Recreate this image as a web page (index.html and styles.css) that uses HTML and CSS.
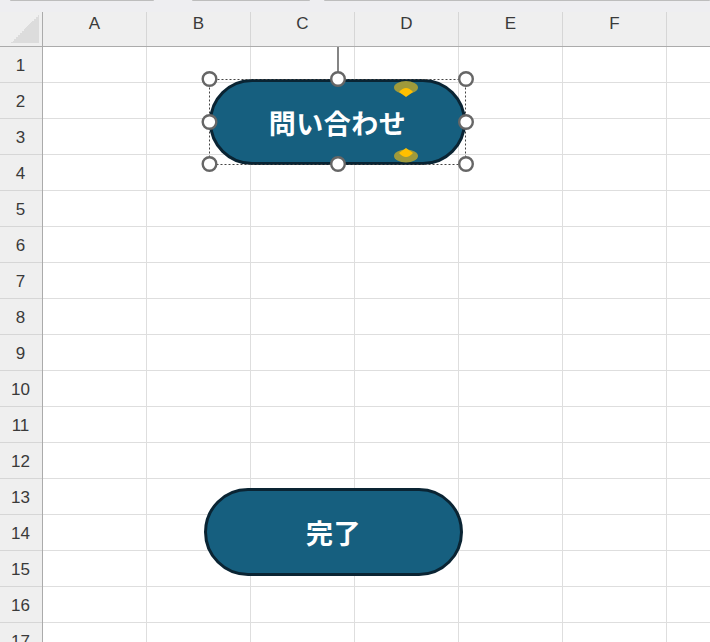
FILE: index.html
```html
<!DOCTYPE html>
<html lang="ja">
<head>
<meta charset="utf-8">
<title>Sheet</title>
<link rel="stylesheet" href="styles.css">
</head>
<body>
<div class="window">
  <div class="topstrip">
    <span class="tab tab-1"></span>
    <span class="tab tab-2"></span>
    <span class="tab tab-3"></span>
  </div>
  <div class="sheet">
    <div class="corner"><span class="corner-tri"></span></div>
    <div class="col-header">
      <div class="col">A</div>
      <div class="col">B</div>
      <div class="col">C</div>
      <div class="col">D</div>
      <div class="col">E</div>
      <div class="col">F</div>
      <div class="col"></div>
    </div>
    <div class="row-header">
      <div class="row">1</div>
      <div class="row">2</div>
      <div class="row">3</div>
      <div class="row">4</div>
      <div class="row">5</div>
      <div class="row">6</div>
      <div class="row">7</div>
      <div class="row">8</div>
      <div class="row">9</div>
      <div class="row">10</div>
      <div class="row">11</div>
      <div class="row">12</div>
      <div class="row">13</div>
      <div class="row">14</div>
      <div class="row">15</div>
      <div class="row">16</div>
      <div class="row">17</div>
    </div>
    <div class="cells">
      <div class="shape shape-inquiry">問い合わせ</div>
      <div class="shape shape-done">完了</div>
      <svg class="selection" width="500" height="200" viewBox="0 0 500 200">
        <line x1="295" y1="0" x2="295" y2="25" stroke="#666" stroke-width="1.6"/>
        <rect x="166.5" y="32.5" width="256" height="85" fill="none" stroke="#444" stroke-width="1" stroke-dasharray="2 2"/>
        <ellipse cx="363" cy="40.5" rx="12" ry="6.5" fill="#9f9a3b"/>
        <path d="M356,45 Q363,37 370,45 L363,50 Z" fill="#ffc000"/>
        <ellipse cx="363" cy="109" rx="12" ry="6.5" fill="#9f9a3b"/>
        <path d="M363,101 L370,106 Q363,114 356,106 Z" fill="#ffc000"/>
        <g fill="#fff" stroke="#666" stroke-width="2.4">
          <circle cx="166.5" cy="32" r="6.8"/>
          <circle cx="295" cy="32" r="6.8"/>
          <circle cx="423" cy="32" r="6.8"/>
          <circle cx="166.5" cy="75" r="6.8"/>
          <circle cx="423" cy="75" r="6.8"/>
          <circle cx="166.5" cy="117" r="6.8"/>
          <circle cx="295" cy="117" r="6.8"/>
          <circle cx="423" cy="117" r="6.8"/>
        </g>
      </svg>
    </div>
  </div>
</div>
</body>
</html>
```
FILE: styles.css
```css
html, body {
  margin: 0;
  padding: 0;
  background: #ffffff;
  overflow: hidden;
}

.window {
  width: 710px;
  height: 642px;
  overflow: hidden;
  font-family: "Liberation Sans", "Open Sans", sans-serif;
  color: #3a3a3a;
  background: #efefef;
}

.topstrip {
  height: 12px;
  background: #eeeef1;
  display: flex;
  align-items: flex-start;
}

.tab {
  display: block;
  height: 1px;
  background: #bdbdbd;
  border-radius: 0 0 2px 2px;
}
.tab-1 { margin-left: 10px; width: 145px; }
.tab-2 { margin-left: 38px; width: 119px; }
.tab-3 { margin-left: 14px; width: 390px; }

.sheet {
  display: grid;
  grid-template-columns: 43px 728px;
  grid-template-rows: 35px 612px;
}

.corner {
  position: relative;
  background: #efefef;
  border-right: 1px solid #ababab;
  border-bottom: 1px solid #ababab;
  box-sizing: border-box;
}

.corner-tri {
  position: absolute;
  right: 3px;
  bottom: 3px;
  width: 28px;
  height: 28px;
  background: linear-gradient(to bottom right, transparent 50%, #dcdcdc 50%);
}

.col-header {
  display: flex;
  background: #efefef;
  border-bottom: 1px solid #ababab;
  box-sizing: border-box;
}

.col {
  flex: 0 0 104px;
  box-sizing: border-box;
  border-right: 1px solid #d6d6d6;
  text-align: center;
  font-size: 17px;
  line-height: 23px;
}

.row-header {
  display: flex;
  flex-direction: column;
  background: #efefef;
  border-right: 1px solid #ababab;
  box-sizing: border-box;
}

.row {
  flex: 0 0 36px;
  box-sizing: border-box;
  border-bottom: 1px solid #d6d6d6;
  display: flex;
  align-items: center;
  justify-content: center;
  padding-top: 3px;
  padding-right: 1px;
  font-size: 17px;
}

.cells {
  position: relative;
  background-color: #ffffff;
  background-image:
    repeating-linear-gradient(to right, transparent 0 103px, #dedede 103px 104px),
    repeating-linear-gradient(to bottom, transparent 0 35px, #dedede 35px 36px);
}

.shape {
  position: absolute;
  box-sizing: border-box;
  display: flex;
  align-items: center;
  justify-content: center;
  background: #165f7f;
  border: 3px solid #0a2433;
  color: #ffffff;
  font-family: "Noto Sans CJK JP", "Noto Sans", sans-serif;
  font-weight: 700;
  font-size: 27px;
  letter-spacing: 0.5px;
}

.shape-inquiry {
  left: 166px;
  top: 32px;
  width: 257px;
  height: 86px;
  border-radius: 43px;
}

.shape-done {
  left: 161px;
  top: 441px;
  width: 259px;
  height: 88px;
  border-radius: 44px;
}

.selection {
  position: absolute;
  left: 0;
  top: 0;
  overflow: visible;
}
```
